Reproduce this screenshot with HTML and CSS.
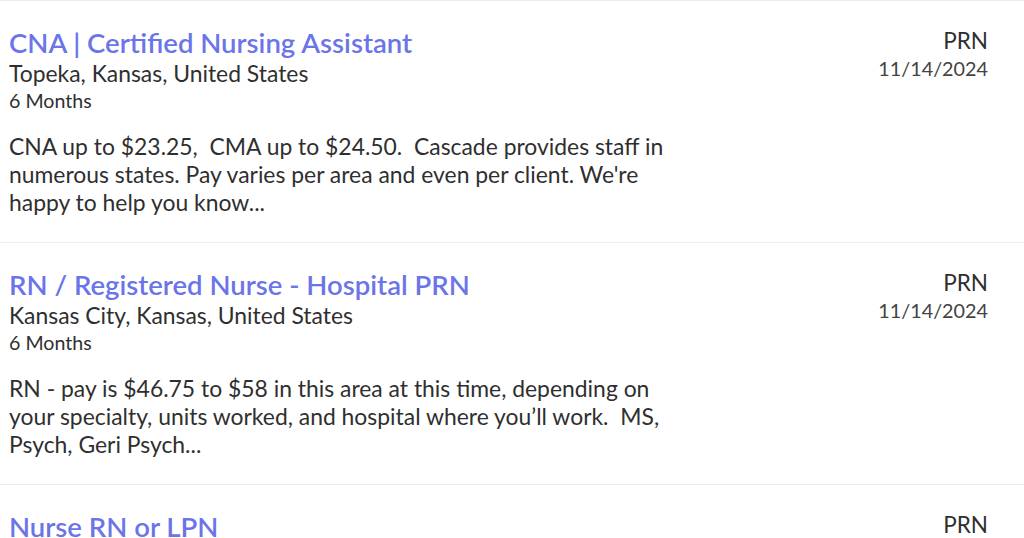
FILE: index.html
```html
<!DOCTYPE html>
<html>
<head>
<meta charset="utf-8">
<link rel="stylesheet" href="styles.css">
</head>
<body>
<div class="list">
  <div class="job">
    <div class="main">
      <a class="title">CNA | Certified Nursing Assistant</a>
      <div class="loc">Topeka, Kansas, United States</div>
      <div class="dur">6 Months</div>
      <p class="desc">CNA up to $23.25,&nbsp; CMA up to $24.50.&nbsp; Cascade provides staff in numerous states. Pay varies per area and even per client. We're happy to help you know...</p>
    </div>
    <div class="side">
      <div class="type">PRN</div>
      <div class="date">11/14/2024</div>
    </div>
  </div>
  <div class="job">
    <div class="main">
      <a class="title">RN / Registered Nurse - Hospital PRN</a>
      <div class="loc">Kansas City, Kansas, United States</div>
      <div class="dur">6 Months</div>
      <p class="desc">RN - pay is $46.75 to $58 in this area at this time, depending on your specialty, units worked, and hospital where you’ll work.&nbsp; MS, Psych, Geri Psych...</p>
    </div>
    <div class="side">
      <div class="type">PRN</div>
      <div class="date">11/14/2024</div>
    </div>
  </div>
  <div class="job last">
    <div class="main">
      <a class="title">Nurse RN or LPN</a>
    </div>
    <div class="side">
      <div class="type">PRN</div>
    </div>
  </div>
</div>
</body>
</html>
```
FILE: styles.css
```css
html, body {
  margin: 0;
  padding: 0;
  background: #ffffff;
  overflow: hidden;
}
body {
  font-family: Lato, "Liberation Sans", sans-serif;
  color: #333333;
}
.list {
  display: flex;
  flex-direction: column;
}
.job {
  display: flex;
  justify-content: space-between;
  border-top: 1px solid #ececf6;
  height: 242px;
  box-sizing: border-box;
  padding: 26px 36px 0 9px;
}
.job.last {
  height: 54px;
}
.main {
  display: flex;
  flex-direction: column;
}
.title {
  font-size: 27.5px;
  font-weight: 600;
  color: #6b74e8;
  line-height: 32px;
}
.loc {
  font-size: 22.9px;
  line-height: 28px;
  color: #2f2f2f;
}
.dur {
  font-size: 19.6px;
  line-height: 28px;
  color: #2f2f2f;
}
.desc {
  margin: 17px 0 0 0;
  width: 668px;
  font-size: 22.9px;
  line-height: 28px;
  color: #2f2f2f;
}
.side {
  display: flex;
  flex-direction: column;
  align-items: flex-end;
  padding-top: 1px;
}
.type {
  font-size: 22.5px;
  line-height: 26px;
  color: #2f2f2f;
}
.date {
  font-size: 19.8px;
  line-height: 28px;
  color: #444;
}
```
